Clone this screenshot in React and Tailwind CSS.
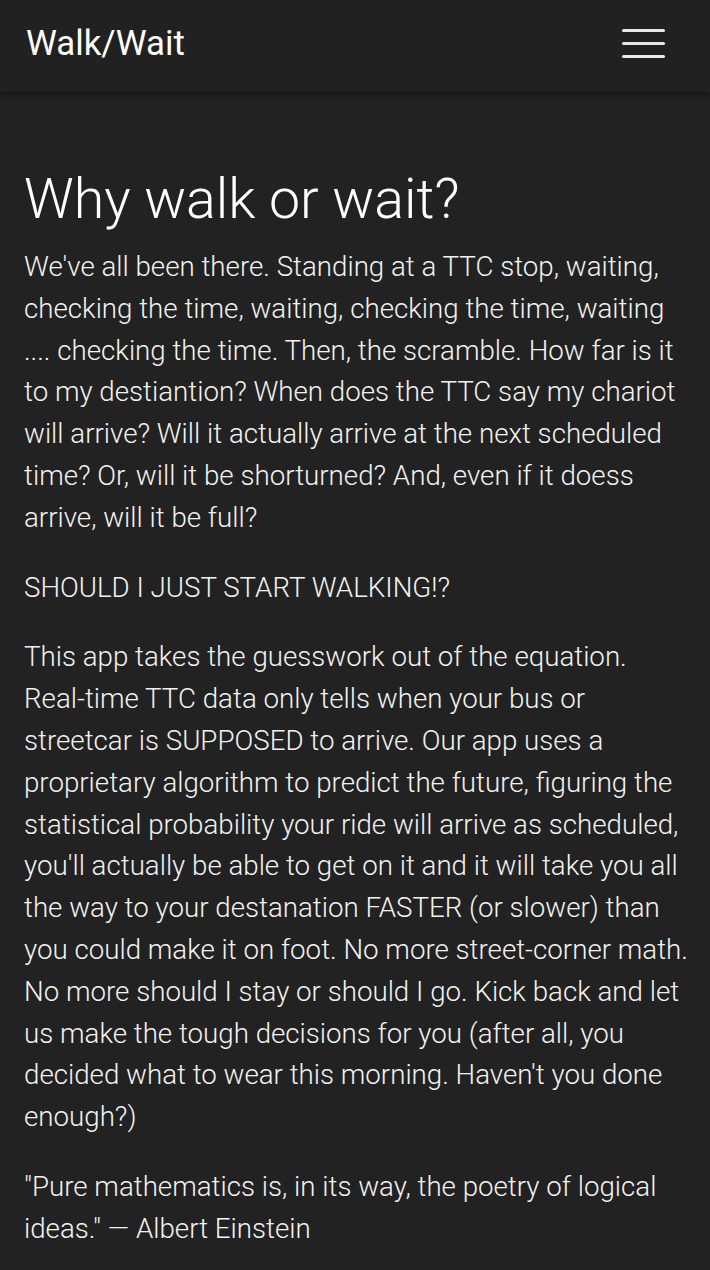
export default function App() {
  return (
    <div className="min-h-[1270px] bg-[#222222] text-white font-['Roboto',sans-serif]">
      <header className="relative z-10 flex h-[92px] items-center justify-between bg-[#212121] pb-[6px] pl-[26px] pr-[45px] shadow-[0_2px_6px_rgba(0,0,0,0.5)]">
        <h1 className="text-[34.8px] font-normal leading-none">Walk/Wait</h1>
        <button className="flex w-[43px] flex-col gap-[10px]" aria-label="menu">
          <span className="block h-[3px] w-full rounded bg-[#e8e8e8]" />
          <span className="block h-[3px] w-full rounded bg-[#e8e8e8]" />
          <span className="block h-[3px] w-full rounded bg-[#e8e8e8]" />
        </button>
      </header>
      <main className="pl-[24px] pr-[16px] pt-[72px] font-light">
        <h2 className="mb-[10px] text-[55.5px] font-light leading-[72px]">Why walk or wait?</h2>
        <div className="space-y-[28px] text-[27.7px] leading-[41.8px] text-[#f2f2f2]">
          <p>
            We've all been there. Standing at a TTC stop, waiting, checking the time, waiting, checking the time, waiting .... checking the time. Then, the scramble. How far is it to my destiantion? When does the TTC say my chariot will arrive? Will it actually arrive at the next scheduled time? Or, will it be shorturned? And, even if it doess arrive, will it be full?
          </p>
          <p>SHOULD I JUST START WALKING!?</p>
          <p>
            This app takes the guesswork out of the equation. Real-time TTC data only tells when your bus or streetcar is SUPPOSED to arrive. Our app uses a proprietary algorithm to predict the future, figuring the statistical probability your ride will arrive as scheduled, you'll actually be able to get on it and it will take you all the way to your destanation FASTER (or slower) than you could make it on foot. No more street-corner math. No more should I stay or should I go. Kick back and let us make the tough decisions for you (after all, you decided what to wear this morning. Haven't you done enough?)
          </p>
          <p>"Pure mathematics is, in its way, the poetry of logical ideas." — Albert Einstein</p>
        </div>
      </main>
    </div>
  );
}
